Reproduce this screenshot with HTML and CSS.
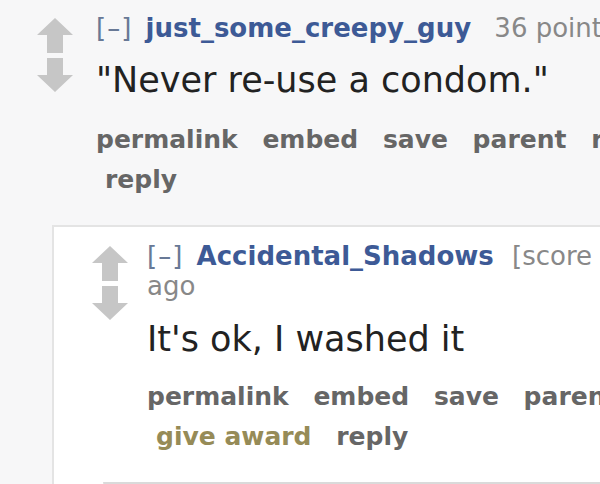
FILE: index.html
```html
<!DOCTYPE html>
<html lang="en">
<head>
    <meta charset="UTF-8">
    <title>comments</title>
    <link rel="stylesheet" href="styles.css">
</head>
<body>
    <div class="thread">
        <div class="comment">
            <div class="midcol">
                <svg class="arrow" viewBox="0 0 36 35"><path d="M18 0 L36 17 L26 17 L26 35 L10 35 L10 17 L0 17 Z"/></svg>
                <svg class="arrow" viewBox="0 0 36 35"><path d="M10 0 L26 0 L26 17 L36 17 L18 34 L0 17 L10 17 Z"/></svg>
            </div>
            <div class="entry">
                <p class="tagline"><span class="expand">[–]</span> <a class="author">just_some_creepy_guy</a> <span class="score">36 points 4 hours ago</span></p>
                <p class="md">"Never re-use a condom."</p>
                <ul class="flat-list">
                    <li>permalink</li>
                    <li>embed</li>
                    <li>save</li>
                    <li>parent</li>
                    <li>report</li>
                    <li>give award</li>
                    <li>reply</li>
                </ul>
            </div>
        </div>

        <div class="child">
            <div class="comment">
                <div class="midcol">
                    <svg class="arrow" viewBox="0 0 36 35"><path d="M18 0 L36 17 L26 17 L26 35 L10 35 L10 17 L0 17 Z"/></svg>
                    <svg class="arrow" viewBox="0 0 36 35"><path d="M10 0 L26 0 L26 17 L36 17 L18 34 L0 17 L10 17 Z"/></svg>
                </div>
                <div class="entry">
                    <p class="tagline"><span class="expand">[–]</span> <a class="author">Accidental_Shadows</a> <span class="score">[score hidden] 3 hours ago</span></p>
                    <p class="md">It's ok, I washed it</p>
                    <ul class="flat-list">
                        <li>permalink</li>
                        <li>embed</li>
                        <li>save</li>
                        <li>parent</li>
                        <li>report</li>
                        <li class="gild">give award</li>
                        <li>reply</li>
                    </ul>
                </div>
            </div>
            <div class="child nested"></div>
        </div>
    </div>
</body>
</html>
```

FILE: styles.css
```css
/* comment thread, zoomed in */
body {
    margin: 0;
    background-color: #f7f7f8;
    font-family: "DejaVu Sans", Verdana, sans-serif;
    overflow: hidden;
}

.thread {
    width: 920px;
    padding-top: 13px;
}

.comment {
    display: flex;
}

.midcol {
    flex: none;
    width: 73px;
    margin-right: 23px;
    display: flex;
    flex-direction: column;
    align-items: flex-end;
    gap: 5px;
    padding-top: 5px;
}

.arrow {
    width: 36px;
    height: 35px;
    fill: #c6c6c6;
}

.entry {
    flex: 1;
    min-width: 0;
}

.tagline {
    margin: 0;
    font-size: 26px;
    line-height: 30px;
    color: #888;
}

.expand {
    color: #687996;
    letter-spacing: 1px;
    margin-right: 5px;
}

.author {
    color: #3d5a96;
    font-weight: bold;
    margin-right: 15px;
}

.md {
    margin: 17px 0 0;
    font-size: 35px;
    line-height: 40px;
    color: #222;
}

.flat-list {
    list-style: none;
    margin: 20px 0 0;
    padding: 0;
    font-size: 25px;
    line-height: 40px;
    font-weight: bold;
    color: #666;
}

.flat-list li {
    display: inline;
    white-space: nowrap;
    padding: 0 7px 0 9px;
}

.flat-list li:first-child {
    padding-left: 0;
}

.flat-list .gild {
    color: #968b57;
}

.child {
    margin: 25px 0 0 52px;
    padding: 14px 90px 0 0;
    background-color: #fff;
    border-top: 2px solid #e4e4e4;
    border-left: 2px solid #e4e4e4;
}

.child .midcol {
    width: 74px;
    margin-right: 19px;
}

.child .author {
    margin-right: 10px;
}

.child .md {
    margin-top: 18px;
}

.child .flat-list {
    margin-top: 18px;
}

.nested {
    margin-left: 49px;
    height: 40px;
    border-top: 3px solid #dadada;
}
```
